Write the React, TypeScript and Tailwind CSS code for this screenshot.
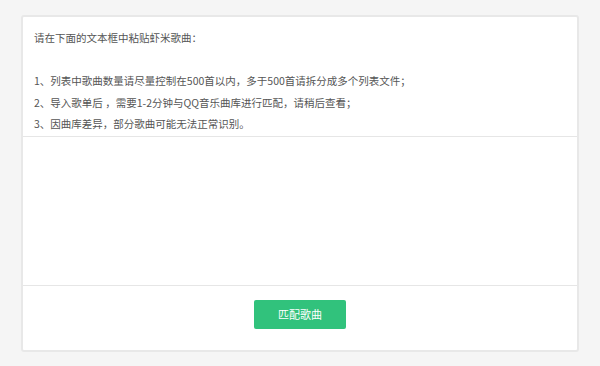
export default function App() {
  const tips = [
    "1、列表中歌曲数量请尽量控制在500首以内，多于500首请拆分成多个列表文件；",
    "2、导入歌单后 ，需要1-2分钟与QQ音乐曲库进行匹配，请稍后查看；",
    "3、因曲库差异，部分歌曲可能无法正常识别。",
  ];

  return (
    <div className="w-[600px] h-[366px] bg-[#f5f5f5] px-[21px] pt-[15px] font-['Noto_Sans_CJK_SC',sans-serif]">
      <div className="flex flex-col bg-white border-2 border-[#e8e8e8] rounded-[3px] h-[337px]">
        {/* Tips */}
        <div className="px-[11px] pt-[10px] h-[120px] border-b border-[#e6e6e6] text-[10.5px] leading-[21.5px] text-[#555]">
          <p>请在下面的文本框中粘贴虾米歌曲：</p>
          <p className="h-[21.5px]"></p>
          {tips.map((t) => (
            <p key={t}>{t}</p>
          ))}
        </div>

        {/* Paste area */}
        <textarea className="h-[149px] w-full resize-none outline-none border-b border-[#e6e6e6] px-[11px] py-2 text-[11px]" />

        {/* Footer */}
        <div className="flex justify-center pt-[14px]">
          <button className="w-[92px] h-[29px] bg-[#31c27c] text-white text-[11px] rounded-[2px]">
            匹配歌曲
          </button>
        </div>
      </div>
    </div>
  );
}
